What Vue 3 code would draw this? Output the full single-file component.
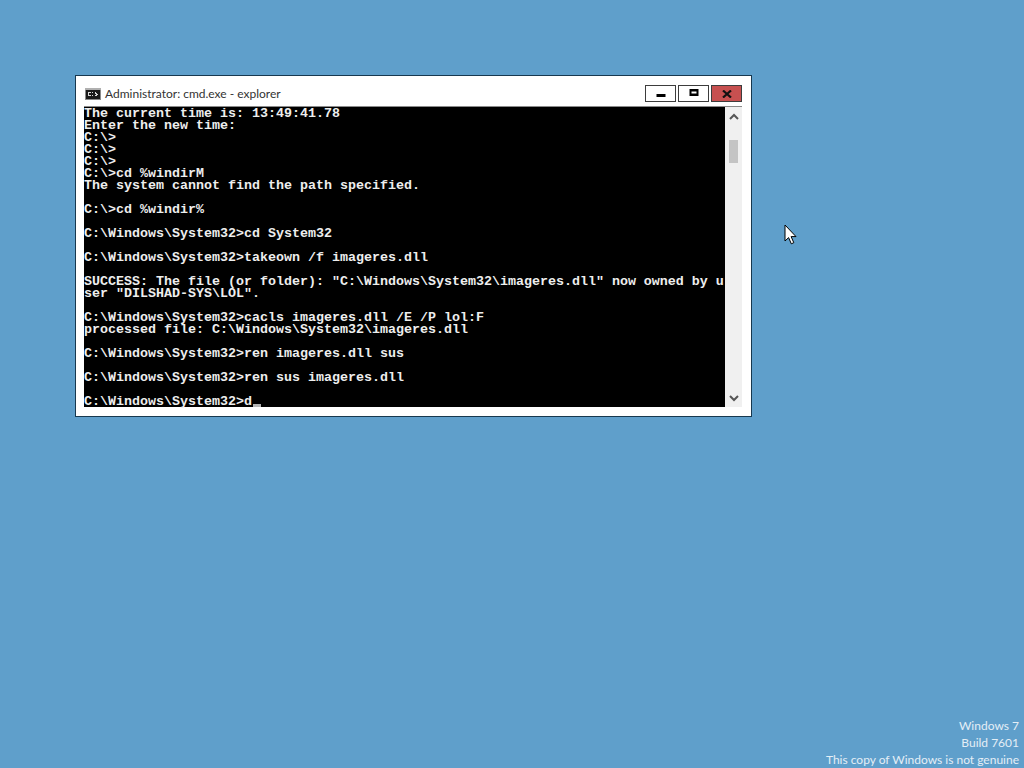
<script setup>
const lines = [
  'The current time is: 13:49:41.78',
  'Enter the new time:',
  'C:\\>',
  'C:\\>',
  'C:\\>',
  'C:\\>cd %windirM',
  'The system cannot find the path specified.',
  '',
  'C:\\>cd %windir%',
  '',
  'C:\\Windows\\System32>cd System32',
  '',
  'C:\\Windows\\System32>takeown /f imageres.dll',
  '',
  'SUCCESS: The file (or folder): "C:\\Windows\\System32\\imageres.dll" now owned by u',
  'ser "DILSHAD-SYS\\LOL".',
  '',
  'C:\\Windows\\System32>cacls imageres.dll /E /P lol:F',
  'processed file: C:\\Windows\\System32\\imageres.dll',
  '',
  'C:\\Windows\\System32>ren imageres.dll sus',
  '',
  'C:\\Windows\\System32>ren sus imageres.dll',
  '',
]
</script>

<template>
  <div class="desktop">
    <section class="window">
      <header class="titlebar">
        <svg class="appicon" width="16" height="12" viewBox="0 0 16 12">
          <rect width="16" height="12" fill="#8a8a8a" />
          <rect y="0" width="16" height="2" fill="#b0b0b0" />
          <rect x="1" y="2" width="14" height="9" fill="#1a1a1a" />
          <path d="M3 4H6V5H4V7H6V8H3ZM7 4H8V5H7ZM7 7H8V8H7ZM10 4H11V5H12V6H13V7H12V8H10V7H11V6H10Z" fill="#d8d8d8" />
        </svg>
        <span class="title">Administrator: cmd.exe - explorer</span>
        <div class="controls">
          <button class="ctl">
            <svg width="10" height="10" viewBox="0 0 10 10"><rect x="0.5" y="5" width="9" height="3" fill="#000" /></svg>
          </button>
          <button class="ctl">
            <svg width="10" height="9" viewBox="0 0 10 9"><path d="M0.5 0H9.5V7H0.5ZM2.5 2.5V4.5H7.5V2.5Z" fill="#000" fill-rule="evenodd" /></svg>
          </button>
          <button class="ctl close">
            <svg width="10" height="8" viewBox="0 0 10 8"><path d="M1 0.5L9 7.5M9 0.5L1 7.5" stroke="#111" stroke-width="2.2" /></svg>
          </button>
        </div>
      </header>
      <div class="client">
        <pre class="console"><div v-for="(l, i) in lines" :key="i" class="line">{{ l }}</div><div class="line">C:\Windows\System32&gt;d<span class="caret"></span></div></pre>
        <div class="scrollbar">
          <svg width="10" height="7" viewBox="0 0 10 7"><path d="M1 6L5 2L9 6" fill="none" stroke="#555" stroke-width="2" /></svg>
          <div class="thumb"></div>
          <svg class="down" width="10" height="7" viewBox="0 0 10 7"><path d="M1 1L5 5L9 1" fill="none" stroke="#555" stroke-width="2" /></svg>
        </div>
      </div>
    </section>

    <svg class="cursor" width="13" height="21" viewBox="0 0 13 21">
      <path d="M1 1V17L4.6 13.6L7.3 19.8L9.8 18.7L7.1 12.6H12Z" fill="#fff" stroke="#000" stroke-width="1" />
    </svg>

    <div class="watermark">
      <div>Windows 7</div>
      <div>Build 7601</div>
      <div>This copy of Windows is not genuine</div>
    </div>
  </div>
</template>

<style>
html, body { margin: 0; padding: 0; overflow: hidden; }
</style>

<style scoped>
.desktop {
  position: relative;
  width: 1024px;
  height: 768px;
  background: #5f9fcb;
  overflow: hidden;
  font-family: "Lato", "Noto Sans", sans-serif;
}
.window {
  position: absolute;
  left: 75px;
  top: 75px;
  width: 677px;
  height: 342px;
  box-sizing: border-box;
  background: #fff;
  border: 1px solid #17384f;
  padding: 0 9px 9px 8px;
  display: flex;
  flex-direction: column;
}
.titlebar {
  height: 30px;
  flex: none;
  display: flex;
  align-items: center;
  box-sizing: border-box;
  padding-top: 5px;
}
.appicon { flex: none; margin-left: 1px; }
.title {
  margin-left: 4px;
  font-size: 12px;
  color: #333;
  white-space: nowrap;
}
.controls {
  margin-left: auto;
  display: flex;
  gap: 2px;
  align-self: flex-start;
  margin-top: 4px;
}
.ctl {
  width: 31px;
  height: 17px;
  box-sizing: border-box;
  padding: 0;
  border: 1px solid #3d3d3d;
  background: #fff;
  display: flex;
  align-items: center;
  justify-content: center;
}
.close { background: #c75050; }
.client {
  flex: 1;
  display: flex;
  min-height: 0;
  border-top: 1px solid #8a8a8a;
}
.console {
  margin: 0;
  width: 641px;
  height: 300px;
  box-sizing: border-box;
  padding-top: 1px;
  background: #000;
  color: #eeeeee;
  font-family: "Liberation Mono", "DejaVu Sans Mono", monospace;
  font-weight: bold;
  font-size: 13.33px;
  line-height: 12px;
  white-space: pre;
}
.line { height: 12px; position: relative; }
.caret {
  display: inline-block;
  width: 8px;
  height: 3px;
  margin-left: 1px;
  background: #b4b4b4;
  vertical-align: -2px;
}
.scrollbar {
  flex: 1;
  background: #f0f0f0;
  display: flex;
  flex-direction: column;
  align-items: center;
  padding-top: 6px;
  box-sizing: border-box;
  height: 300px;
}
.thumb {
  width: 9px;
  height: 23px;
  margin-top: 20px;
  background: #c4c4c4;
}
.down { margin-top: auto; margin-bottom: 5px; }
.cursor {
  position: absolute;
  left: 784px;
  top: 224px;
}
.watermark {
  position: absolute;
  right: 5px;
  bottom: 0;
  text-align: right;
  color: #e4eef6;
  font-size: 12px;
  line-height: 17px;
}
</style>
